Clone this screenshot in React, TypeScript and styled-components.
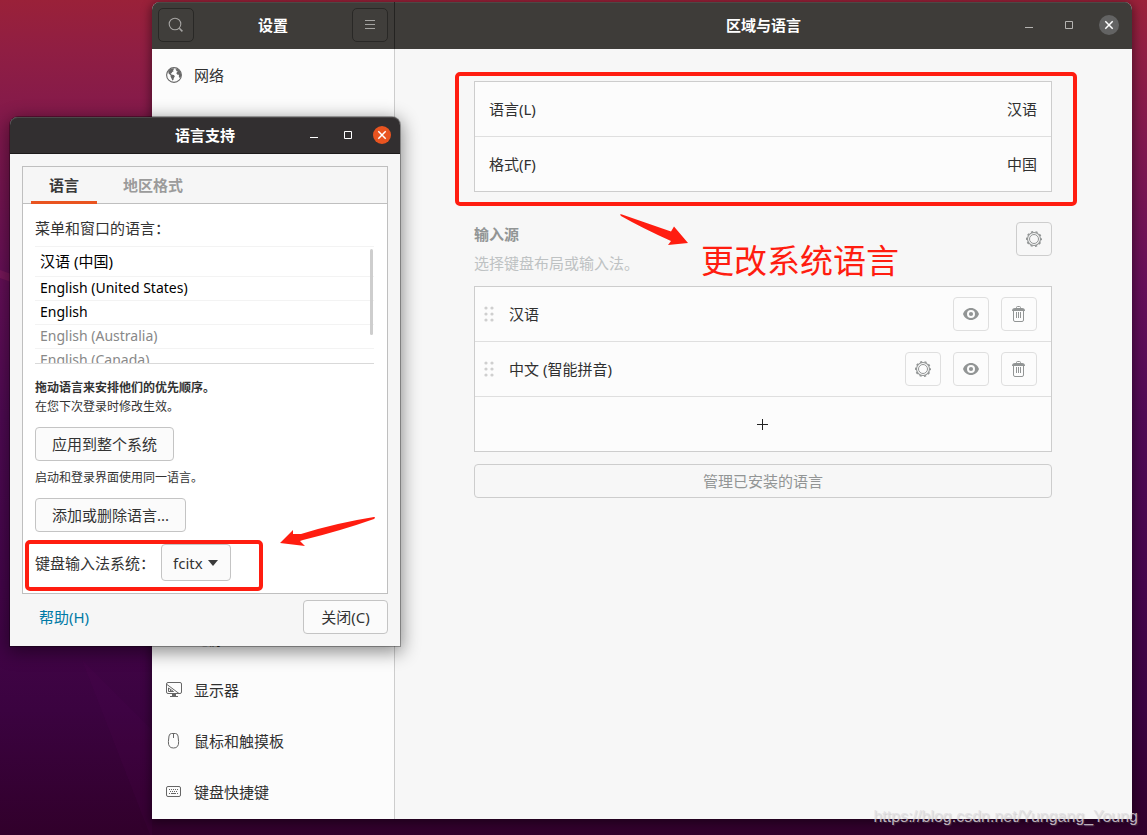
import React from "react";
import styled, { createGlobalStyle, css } from "styled-components";

const Global = createGlobalStyle`
  * { box-sizing: border-box; }
  body { margin: 0; }
  body, button, select {
    font-family: "Noto Sans", "Noto Sans CJK SC", sans-serif;
    font-size: 15px;
    line-height: 20px;
    color: #333;
  }
  h1, h2, p, ul { margin: 0; padding: 0; font-size: inherit; font-weight: inherit; }
  ul { list-style: none; }
  svg { display: block; flex: none; }
`;

const Desktop = styled.div`
  position: relative;
  min-height: 100vh;
  overflow: hidden;
  background: linear-gradient(180deg, #9a2139 0%, #901e43 6%, #7f184e 17%, #650f58 34%, #500a54 50%, #45054b 70%, #3b0340 85%, #31002b 100%);
`;

const Ray = styled.svg`
  position: absolute;
  inset: 0;
  width: 100%;
  height: 100%;
`;

/* Settings window */

const SettingsWindow = styled.main`
  position: absolute;
  inset: 2px 15px 16px 152px;
  display: grid;
  grid-template-columns: 243px 1fr;
  grid-template-rows: 47px 1fr;
  border-radius: 8px 8px 0 0;
  overflow: hidden;
  background: #f7f7f7;
`;

const WindowShade = styled.div`
  position: absolute;
  inset: 2px 15px 16px 152px;
  border-radius: 8px 8px 0 0;
  box-shadow: 0 2px 10px 2px rgba(0, 0, 0, 0.4);
`;

const HeaderBar = styled.header<{ $divided?: boolean }>`
  display: flex;
  align-items: center;
  justify-content: space-between;
  padding: 0 6px 1px;
  background: #3e3c39;
  box-shadow: inset 0 1px #4b4946;
  ${(p) => p.$divided && css`border-right: 1px solid #242321;`}
`;

const PaneHeader = styled(HeaderBar)`
  display: grid;
  grid-template-columns: 1fr auto 1fr;
  padding: 0 13px 1px;
`;

const Title = styled.h1`
  font-weight: 700;
  color: #fff;
  text-align: center;
`;

const HeaderButton = styled.button`
  display: grid;
  place-items: center;
  width: 36px;
  height: 34px;
  padding: 0;
  border: 1px solid #292826;
  border-radius: 5px;
  background: #403e3b;
  color: #a5a4a2;
`;

const Controls = styled.div<{ $gap: number }>`
  display: flex;
  justify-content: flex-end;
  align-items: center;
  gap: ${(p) => p.$gap}px;
`;

const WindowButton = styled.button<{ $size: number; $fill?: string; $ink: string }>`
  display: grid;
  place-items: center;
  width: ${(p) => p.$size}px;
  height: ${(p) => p.$size}px;
  padding: 0;
  border: 0;
  border-radius: 50%;
  background: ${(p) => p.$fill || "transparent"};
  color: ${(p) => p.$ink};
`;

const Sidebar = styled.nav`
  display: flex;
  flex-direction: column;
  justify-content: space-between;
  padding-bottom: 2px;
  background: #fcfcfc;
  border-right: 1px solid #cdcdcd;
`;

const NavItem = styled.li`
  display: flex;
  align-items: center;
  gap: 12px;
  height: 51px;
  padding: 0 14px;
  color: #303030;
  svg { color: #666; }
`;

const Pane = styled.section`
  padding: 32px 25px 32px 24px;
`;

const Column = styled.div`
  max-width: 578px;
  margin: 0 auto;
`;

const Card = styled.div`
  position: relative;
  border: 1px solid #cdcdcd;
  background: #fcfcfc;
`;

const Row = styled.div`
  display: flex;
  align-items: center;
  justify-content: space-between;
  height: 54px;
  padding: 0 14px;
  color: #303030;
  & + & { height: 55px; border-top: 1px solid #dfdfdf; }
`;

const SourceRow = styled(Row)`
  justify-content: flex-start;
  gap: 12px;
  padding: 0 14px 0 8px;
`;

const SourceName = styled.span`
  flex: 1;
  padding-left: 2px;
`;

const AddButton = styled.button`
  display: grid;
  place-items: center;
  width: 100%;
  height: 55px;
  padding: 0;
  border: 0;
  border-top: 1px solid #dfdfdf;
  background: transparent;
`;

const IconButton = styled.button<{ $tone?: "plain" }>`
  display: grid;
  place-items: center;
  width: 36px;
  height: 34px;
  padding: 0;
  border: 1px solid ${(p) => (p.$tone ? "#cdcdcd" : "#dfdfdf")};
  border-radius: 4px;
  background: ${(p) => (p.$tone ? "#f7f7f7" : "#fcfcfc")};
  color: #929595;
`;

const SectionHead = styled.div`
  position: relative;
  display: flex;
  align-items: flex-start;
  justify-content: space-between;
  margin: 30px 0 12px;
`;

const SectionTitle = styled.h2`
  font-weight: 700;
  color: #929595;
  line-height: 24px;
`;

const Hint = styled.p`
  padding-top: 6px;
  color: #bec2c3;
  line-height: 22px;
`;

const ManageButton = styled.button`
  display: block;
  width: 100%;
  height: 34px;
  margin-top: 12px;
  padding: 0;
  border: 1px solid #cdcdcd;
  border-radius: 4px;
  background: #f7f7f7;
  color: #929595;
`;

/* Language support dialog */

const Dialog = styled.section`
  position: absolute;
  left: 10px;
  top: 117px;
  width: 390px;
  border-radius: 8px 8px 0 0;
  background: #f6f6f6;
  box-shadow: 0 0 0 1px rgba(0, 0, 0, 0.3), 0 4px 18px 2px rgba(0, 0, 0, 0.45);
`;

const DialogHeader = styled.header`
  display: grid;
  grid-template-columns: 1fr auto 1fr;
  align-items: center;
  height: 37px;
  padding: 0 9px 1px;
  border-radius: 8px 8px 0 0;
  background: #322f30;
  border-bottom: 1px solid #1c1a1b;
  box-shadow: inset 0 1px #4b4849;
`;

const DialogBody = styled.div`
  padding: 12px;
`;

const Notebook = styled.div`
  border: 1px solid #bfbfbf;
  background: #fff;
`;

const TabBar = styled.div`
  display: flex;
  gap: 8px;
  height: 37px;
  padding: 0 8px;
  background: #f6f6f6;
  border-bottom: 1px solid #bfbfbf;
`;

const Tab = styled.button<{ $active?: boolean }>`
  height: 37px;
  padding: 2px 18px 0;
  border: 0;
  border-bottom: 3px solid ${(p) => (p.$active ? "#e95420" : "transparent")};
  background: transparent;
  font-weight: 700;
  color: ${(p) => (p.$active ? "#3a3a3a" : "#9b9b9b")};
`;

const TabPanel = styled.div`
  display: flex;
  flex-direction: column;
  align-items: flex-start;
  padding: 14px 13px 12px 12px;
`;

const LanguageBox = styled.div`
  position: relative;
  align-self: stretch;
  height: 118px;
  margin-top: 8px;
  border-bottom: 1px solid #d9d9d9;
  overflow: hidden;
`;

const LanguageItem = styled.li<{ $tall?: boolean; $dim?: boolean }>`
  height: ${(p) => (p.$tall ? 30 : 24)}px;
  padding: ${(p) => (p.$tall ? "4px" : "1px")} 5px 0;
  border-top: 1px solid #f3f3f3;
  font-size: ${(p) => (p.$tall ? 15 : 14)}px;
  color: ${(p) => (p.$dim ? "#888" : "#000")};
`;

const ScrollThumb = styled.div`
  position: absolute;
  top: 3px;
  right: 1px;
  width: 3px;
  height: 86px;
  border-radius: 2px;
  background: #cecece;
`;

const Note = styled.p<{ $bold?: boolean }>`
  font-size: 12px;
  line-height: 19px;
  font-weight: ${(p) => (p.$bold ? 700 : 400)};
`;

const PushButton = styled.button`
  min-width: 85px;
  height: 34px;
  padding: 0 16px;
  border: 1px solid #c4c4c4;
  border-radius: 4px;
  background: #fbfbfb;
`;

const Stack = styled.div<{ $top: number }>`
  margin-top: ${(p) => p.$top}px;
`;

const ImeRow = styled.div`
  position: relative;
  display: flex;
  align-items: center;
  gap: 6px;
  margin-top: 12px;
`;

const SelectWrap = styled.div`
  position: relative;
  svg { position: absolute; right: 13px; top: 16px; pointer-events: none; }
`;

const Select = styled.select`
  appearance: none;
  width: 70px;
  height: 37px;
  padding: 0 24px 0 11px;
  border: 1px solid #c4c4c4;
  border-radius: 4px;
  background: #fbfbfb;
`;

const DialogFooter = styled.footer`
  display: flex;
  align-items: center;
  justify-content: space-between;
  padding: 6px 0 0 17px;
`;

const HelpLink = styled.a`
  color: #007aa6;
  text-decoration: none;
`;

/* Red markup */

const Frame = styled.div<{ $inset: string }>`
  position: absolute;
  inset: ${(p) => p.$inset};
  border: 4px solid #ff1d10;
  border-radius: 5px;
  pointer-events: none;
`;

const Arrow = styled.svg<{ $x: number; $y: number }>`
  position: absolute;
  left: ${(p) => p.$x}px;
  top: ${(p) => p.$y}px;
  fill: #ff1d10;
`;

const Callout = styled.strong`
  position: absolute;
  left: 227px;
  top: 17px;
  font-size: 33px;
  line-height: 44px;
  font-weight: 400;
  color: #ff1d10;
  white-space: nowrap;
`;

const Watermark = styled.span`
  position: absolute;
  right: 9px;
  bottom: 8px;
  font-family: "Liberation Sans", sans-serif;
  font-size: 16px;
  line-height: 20px;
  color: rgba(225, 222, 226, 0.8);
  text-shadow: 1px 1px 1px rgba(130, 130, 130, 0.3);
`;

/* Icons */

const SearchIcon = () => (
  <svg width="16" height="16" viewBox="0 0 16 16" fill="none" stroke="currentColor">
    <circle cx="7" cy="7" r="5.8" strokeWidth="1.1" />
    <path d="M11.3 11.3 14.4 14.4" strokeWidth="1.6" />
  </svg>
);

const MenuIcon = () => (
  <svg width="16" height="16" viewBox="0 0 16 16" stroke="currentColor">
    <path d="M3 3.5h10M3 7.5h10M3 11.5h10" />
  </svg>
);

const MinimizeIcon = () => (
  <svg width="16" height="16" viewBox="0 0 16 16" stroke="currentColor">
    <path d="M4 10.5h8" />
  </svg>
);

const MaximizeIcon = () => (
  <svg width="16" height="16" viewBox="0 0 16 16" fill="none" stroke="currentColor">
    <path d="M4.5 4.5h7v7h-7z" />
  </svg>
);

const CloseIcon = () => (
  <svg width="16" height="16" viewBox="0 0 16 16" stroke="currentColor" strokeWidth="1.5">
    <path d="M4.3 4.3 11.7 11.7M11.7 4.3 4.3 11.7" />
  </svg>
);

const GlobeIcon = () => (
  <svg width="16" height="16" viewBox="0 0 16 16" fill="currentColor">
    <circle cx="8" cy="8" r="7.4" fill="none" stroke="currentColor" strokeWidth="1.1" />
    <path d="M2.2 4.2 4.5 2 7.5 1.2 8.2 2.3 7 3 7.6 4.2 6.2 5 5.6 6.3 4.6 6.6 5.4 7.6 7.8 8 8.9 9.3 7.8 11 7.4 13 6.3 13.6 5.5 11.6 4.6 9.7 4.6 8.3 2.6 6.6z" />
    <path d="M9.5 2.3 11.5 1.9 14 4.2 15.2 7.5 14.8 10.3 13.6 11 12.8 9.6 13 7.8 11.6 7.7 10.4 6.6 10.8 5.2 12 4.7 10.7 4.2z" />
  </svg>
);

const BatteryIcon = () => (
  <svg width="16" height="16" viewBox="0 0 16 16" fill="none" stroke="currentColor">
    <path d="M1.5 4.500h11v7h-11zM12.500 6.500h2v3h-2" />
  </svg>
);

const DisplayIcon = () => (
  <svg width="16" height="16" viewBox="0 0 16 16" fill="none" stroke="currentColor">
    <rect x="0.5" y="0.5" width="15" height="11" rx="1.5" />
    <path d="M1 2.500 13 11.500M2.500 6v3.500h5zM4.500 7.800v1.700" />
    <path d="M6 12h4v2h2v1H4v-1h2z" fill="currentColor" stroke="none" />
  </svg>
);

const MouseIcon = () => (
  <svg width="16" height="16" viewBox="0 0 16 16" fill="none" stroke="currentColor">
    <path d="M5.5.5h4q2 0 2.500 2.500l.6 5.500q.4 6.500-5.100 6.500T2.400 8.500L3 3q.5-2.500 2.500-2.500z" />
    <path d="M7.500 1v4" />
  </svg>
);

const KeyboardIcon = () => (
  <svg width="16" height="16" viewBox="0 0 16 16" fill="none" stroke="currentColor">
    <rect x="0.5" y="2.5" width="14" height="10" rx="1.5" />
    <path d="M3 5.500h10M4 7.500h8" strokeDasharray="1 1" />
    <path d="M3 9.500h1M5 9.500h5M11 9.500h1" />
  </svg>
);

const GearIcon = () => (
  <svg width="16" height="16" viewBox="0 0 16 16" fill="none" stroke="currentColor">
    <circle cx="8" cy="8" r="4.5" />
    <circle cx="8" cy="8" r="6.5" strokeWidth="1.1" />
    <circle cx="8" cy="8" r="7.3" strokeWidth="1.4" strokeDasharray="2.2 2.387" strokeDashoffset="1" />
  </svg>
);

const EyeIcon = () => (
  <svg width="16" height="16" viewBox="0 0 16 16" fill="currentColor">
    <path fillRule="evenodd" d="M8 2C4.200 2 1.300 4.400 0 8c1.300 3.600 4.200 6 8 6s6.700-2.400 8-6c-1.300-3.600-4.200-6-8-6zm0 2a4 4 0 1 1 0 8 4 4 0 0 1 0-8z" />
    <circle cx="8" cy="8" r="2.1" />
  </svg>
);

const TrashIcon = () => (
  <svg width="16" height="16" viewBox="0 0 16 16" fill="none" stroke="currentColor">
    <path d="M5.500 3V1.500q0-1 1-1h2q1 0 1 1V3" />
    <path d="M1 5q0-3 3-3h7q3 0 3 3z" fill="currentColor" stroke="none" />
    <path d="M2.500 5v9q0 1.500 1.500 1.500h7q1.500 0 1.500-1.500V5M5.500 6v6M7.500 6v6M9.500 6v6" />
  </svg>
);

const GripIcon = () => (
  <svg width="12" height="16" viewBox="0 0 12 16" fill="#cfcfcf">
    {[2, 8, 14].map((y) => (
      <React.Fragment key={y}>
        <circle cx="3" cy={y} r="1.6" />
        <circle cx="9" cy={y} r="1.6" />
      </React.Fragment>
    ))}
  </svg>
);

const PlusIcon = () => (
  <svg width="12" height="12" viewBox="0 0 12 12" stroke="#222">
    <path d="M0 6.500h11M5.500 1v11" />
  </svg>
);

const sources = [
  { name: "汉语", hasSettings: false },
  { name: "中文 (智能拼音)", hasSettings: true },
];

const languages = [
  { name: "汉语 (中国)", tall: true },
  { name: "English (United States)" },
  { name: "English" },
  { name: "English (Australia)", dim: true },
  { name: "English (Canada)", dim: true },
];

export default function App() {
  return (
    <>
      <Global />
      <Desktop>
        <Ray aria-hidden="true" viewBox="0 0 1147 835" preserveAspectRatio="none">
          <path d="M0 270 152 325v8L0 278z" fill="#8c2060" opacity=".5" />
          <path d="M82 660 152 730v110z" fill="#5c0a5c" opacity=".12" />
        </Ray>
        <WindowShade />
        <SettingsWindow>
          <HeaderBar $divided>
            <HeaderButton aria-label="搜索"><SearchIcon /></HeaderButton>
            <Title>设置</Title>
            <HeaderButton aria-label="菜单"><MenuIcon /></HeaderButton>
          </HeaderBar>
          <PaneHeader>
            <span />
            <Title>区域与语言</Title>
            <Controls $gap={20}>
              <WindowButton $size={20} $ink="#b4b3b1" aria-label="最小化"><MinimizeIcon /></WindowButton>
              <WindowButton $size={20} $ink="#b4b3b1" aria-label="最大化"><MaximizeIcon /></WindowButton>
              <WindowButton $size={20} $fill="#636363" $ink="#fff" aria-label="关闭"><CloseIcon /></WindowButton>
            </Controls>
          </PaneHeader>
          <Sidebar>
            <ul>
              <NavItem><GlobeIcon />网络</NavItem>
            </ul>
            <ul>
              <NavItem><BatteryIcon />电源</NavItem>
              <NavItem><DisplayIcon />显示器</NavItem>
              <NavItem><MouseIcon />鼠标和触摸板</NavItem>
              <NavItem><KeyboardIcon />键盘快捷键</NavItem>
            </ul>
          </Sidebar>
          <Pane>
            <Column>
              <Card>
                <Row><span>语言(L)</span><span>汉语</span></Row>
                <Row><span>格式(F)</span><span>中国</span></Row>
                <Frame $inset="-10px -26px -15px -20px" />
              </Card>
              <SectionHead>
                <div>
                  <SectionTitle>输入源</SectionTitle>
                  <Hint>选择键盘布局或输入法。</Hint>
                </div>
                <IconButton $tone="plain" aria-label="输入源选项"><GearIcon /></IconButton>
                <Arrow $x={146} $y={-8} width="70" height="32" viewBox="0 0 70 32" aria-hidden="true">
                  <path d="M0 .5Q1 0 2 .5L51 17.500 54 12.500 68 29 48 31 51 27Q22 14 1 2z" />
                </Arrow>
                <Callout>更改系统语言</Callout>
              </SectionHead>
              <Card>
                {sources.map((s) => (
                  <SourceRow key={s.name}>
                    <GripIcon />
                    <SourceName>{s.name}</SourceName>
                    {s.hasSettings && <IconButton aria-label="首选项"><GearIcon /></IconButton>}
                    <IconButton aria-label="查看布局"><EyeIcon /></IconButton>
                    <IconButton aria-label="移除"><TrashIcon /></IconButton>
                  </SourceRow>
                ))}
                <AddButton aria-label="添加"><PlusIcon /></AddButton>
              </Card>
              <ManageButton>管理已安装的语言</ManageButton>
            </Column>
          </Pane>
        </SettingsWindow>

        <Dialog>
          <DialogHeader>
            <span />
            <Title as="h2">语言支持</Title>
            <Controls $gap={16}>
              <WindowButton $size={18} $ink="#fff" aria-label="最小化"><MinimizeIcon /></WindowButton>
              <WindowButton $size={18} $ink="#fff" aria-label="最大化"><MaximizeIcon /></WindowButton>
              <WindowButton $size={18} $fill="#e95420" $ink="#fff" aria-label="关闭"><CloseIcon /></WindowButton>
            </Controls>
          </DialogHeader>
          <DialogBody>
            <Notebook>
              <TabBar role="tablist">
                <Tab role="tab" aria-selected="true" $active>语言</Tab>
                <Tab role="tab" aria-selected="false">地区格式</Tab>
              </TabBar>
              <TabPanel role="tabpanel">
                <p>菜单和窗口的语言：</p>
                <LanguageBox>
                  <ul>
                    {languages.map((l) => (
                      <LanguageItem key={l.name} $tall={l.tall} $dim={l.dim}>{l.name}</LanguageItem>
                    ))}
                  </ul>
                  <ScrollThumb />
                </LanguageBox>
                <Stack $top={14}>
                  <Note $bold>拖动语言来安排他们的优先顺序。</Note>
                  <Note>在您下次登录时修改生效。</Note>
                </Stack>
                <Stack $top={11}><PushButton>应用到整个系统</PushButton></Stack>
                <Stack $top={7}><Note>启动和登录界面使用同一语言。</Note></Stack>
                <Stack $top={11}><PushButton>添加或删除语言...</PushButton></Stack>
                <ImeRow>
                  <label htmlFor="ime">键盘输入法系统：</label>
                  <SelectWrap>
                    <Select id="ime" defaultValue="fcitx"><option>fcitx</option></Select>
                    <svg width="10" height="6" viewBox="0 0 10 6"><path d="M0 0h10L5 6z" fill="#3a3a3a" /></svg>
                  </SelectWrap>
                  <Frame $inset="-4px -32px -10px -10px" />
                  <Arrow $x={245} $y={-27} width="96" height="32" viewBox="0 0 96 32" aria-hidden="true">
                    <path d="M94 0q2 0 0 2Q60 14 23 23l-3 1 5 5L0 26l13-13v4L21 17Q56 6 94 0z" />
                  </Arrow>
                </ImeRow>
              </TabPanel>
            </Notebook>
            <DialogFooter>
              <HelpLink href="#help">帮助(H)</HelpLink>
              <PushButton>关闭(C)</PushButton>
            </DialogFooter>
          </DialogBody>
        </Dialog>
        <Watermark>https://blog.csdn.net/Yungang_Young</Watermark>
      </Desktop>
    </>
  );
}
